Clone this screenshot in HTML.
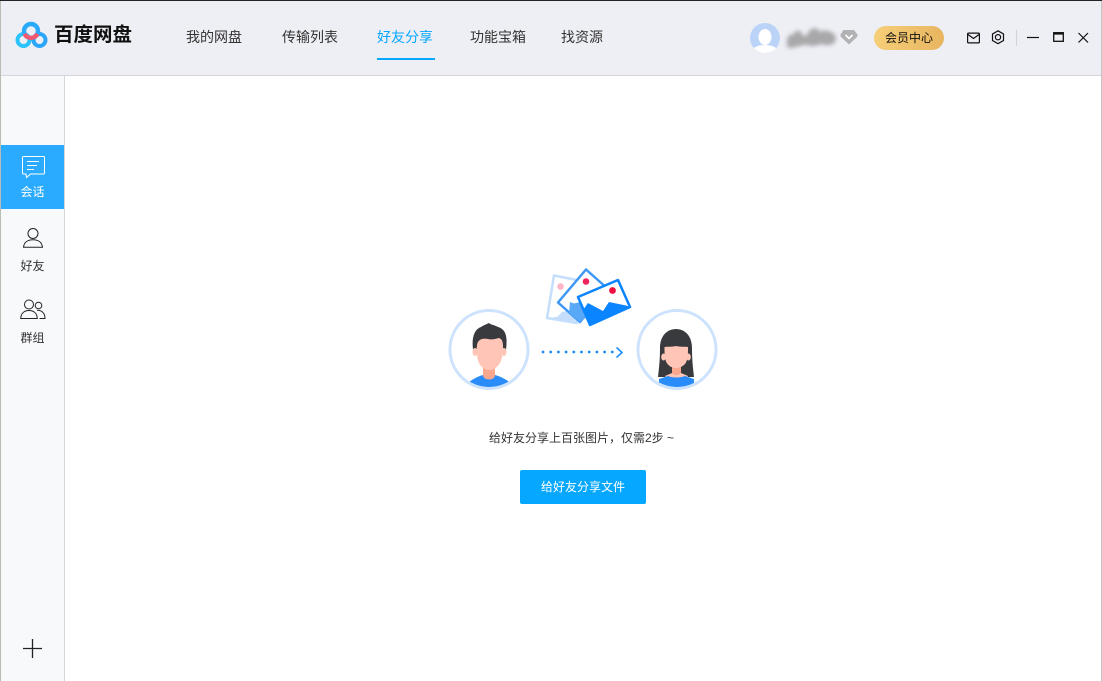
<!DOCTYPE html>
<html lang="zh"><head><meta charset="utf-8"><title>百度网盘</title>
<style>
html,body{margin:0;padding:0;background:#fff}
body{width:1102px;height:681px;position:relative;overflow:hidden;font-family:"Liberation Sans","Noto Sans CJK SC","WenQuanYi Zen Hei",sans-serif;color:#333}
div,span{position:absolute;white-space:nowrap}
.nav{top:28px;font-size:14px;line-height:18px;color:#333}
.side{left:1px;width:63px;text-align:center;font-size:12px;line-height:16px;color:#333}
svg{position:absolute;overflow:visible}
</style></head><body>
<div style="left:0;top:0;width:1102px;height:1px;background:#222"></div>
<div style="left:1px;top:1px;width:1100px;height:74px;background:#eeeff5"></div>
<div style="left:1px;top:75px;width:1100px;height:1px;background:#d5d6dc"></div>
<div style="left:1px;top:76px;width:63px;height:605px;background:#f8f9fb"></div>
<div style="left:64px;top:76px;width:1px;height:605px;background:#d5d6dc"></div>
<div style="left:0;top:1px;width:1px;height:680px;background:#b9bcb4"></div>
<div style="left:1101px;top:1px;width:1px;height:680px;background:#c4c4c4"></div>

<svg style="left:0;top:0" width="64" height="76" viewBox="0 0 64 76" fill="none">
<circle cx="23.500" cy="40" r="6" stroke="#2ac4fa" stroke-width="4"/>
<circle cx="39.500" cy="40" r="6" stroke="#2aa6fa" stroke-width="4"/>
<circle cx="31" cy="31" r="7" stroke="#2aaafa" stroke-width="4.400"/>
<path d="M24.600 33.800A7 7 0 0 0 37.400 33.800" stroke="#f5586e" stroke-width="4.400"/>
</svg>
<div style="left:54px;top:22px;font-size:19.500px;line-height:27px;font-weight:700;color:#111">百度网盘</div>

<div class="nav" style="left:186px">我的网盘</div>
<div class="nav" style="left:282px">传输列表</div>
<div class="nav" style="left:377px;color:#06a7ff">好友分享</div>
<div style="left:377px;top:58px;width:58px;height:2px;background:#06a7ff"></div>
<div class="nav" style="left:470px">功能宝箱</div>
<div class="nav" style="left:561px">找资源</div>

<svg style="left:750px;top:23px" width="30" height="30" viewBox="0 0 30 30">
<clipPath id="av"><circle cx="15" cy="15" r="15"/></clipPath>
<circle cx="15" cy="15" r="15" fill="#bcd3f8"/>
<g clip-path="url(#av)"><ellipse cx="15" cy="14" rx="6.500" ry="8" fill="#fff"/><ellipse cx="15" cy="27" rx="12" ry="5" fill="#fff"/></g>
</svg>
<svg style="left:786px;top:26px" width="54" height="24" viewBox="0 0 54 24">
<defs><filter id="bl" x="-20%" y="-40%" width="140%" height="180%"><feGaussianBlur stdDeviation="2.200"/></filter></defs>
<path d="M1 20C0 12 3 7 7 9C9 5 12 3 15 6C17 10 18 11 21 9C24 1 31 0 34 6C39 3 45 5 49 9C52 16 47 20 39 19C34 17 30 21 24 20C19 17 14 21 9 21C6 22 2 23 1 20Z" fill="#a8a8aa" filter="url(#bl)"/>
</svg>
<svg style="left:840px;top:30px" width="18" height="15" viewBox="0 0 18 15">
<path d="M3.500 0H14L17.500 4.500V6.500L9 14.500L0.500 6.500V4.500Z" fill="#b2b2b4"/>
<path d="M5.500 5L9 8.500L12.500 5" fill="none" stroke="#fff" stroke-width="1.600"/>
</svg>
<div style="left:874px;top:26px;width:70px;height:24px;border-radius:12px;background:linear-gradient(90deg,#f6cf78,#e8b560);text-align:center;font-size:12px;line-height:25px;color:#111">会员中心</div>

<svg style="left:960px;top:22px" width="142" height="30" viewBox="0 0 142 30" fill="none" stroke="#111" stroke-width="1.200">
<rect x="7.600" y="11.100" width="11.800" height="9.800" rx="1"/>
<path d="M8 12.500L13.500 16.500L19 12.500"/>
<path d="M38 8.800L43.500 12V18.500L38 21.700L32.500 18.500V12Z"/>
<circle cx="38" cy="15.200" r="2.600"/>
<path d="M56.500 8V24" stroke="#d3d4da"/>
<path d="M67 15.500H79"/>
<rect x="93.700" y="10.700" width="9.600" height="8.600" stroke-width="1.300"/>
<path d="M93.500 11.500H103.500" stroke-width="2.200"/>
<path d="M118.500 11L128 20.500M128 11L118.500 20.500"/>
</svg>

<div style="left:1px;top:145px;width:63px;height:64px;background:#2aabff"></div>
<svg style="left:21px;top:155px" width="24" height="24" viewBox="0 0 24 24" fill="none" stroke="#fff" stroke-width="1">
<path d="M2.500 1.500H22.500A1 1 0 0 1 23.500 2.500V18A1 1 0 0 1 22.500 19H9.500L5.500 22.500L5 19H2.500A1 1 0 0 1 1.500 18V2.500A1 1 0 0 1 2.500 1.500Z"/>
<path d="M6 6.500H18M6 10.500H16M6 14.500H13"/>
</svg>
<div class="side" style="top:184px;color:#fff">会话</div>
<svg style="left:22px;top:227px" width="22" height="21" viewBox="0 0 22 21" fill="none" stroke="#222" stroke-width="1">
<circle cx="11" cy="6.500" r="5"/>
<path d="M1.500 20.300C2 15 6 12.700 11 12.700C16 12.700 20 15 20.500 20.300Z"/>
</svg>
<div class="side" style="top:258px">好友</div>
<svg style="left:20px;top:299px" width="26" height="21" viewBox="0 0 26 21" fill="none" stroke="#222" stroke-width="1">
<circle cx="9" cy="5.500" r="4.500"/>
<path d="M0.700 19.500C1 14 4.500 11.500 9 11.500C13.500 11.500 17 14 17.300 19.500Z"/>
<circle cx="18.500" cy="6.500" r="3.300"/>
<path d="M17 11.300C22 11 25 14.500 25 19.500H19.500"/>
</svg>
<div class="side" style="top:330px">群组</div>
<svg style="left:23px;top:639px" width="20" height="20" viewBox="0 0 20 20" stroke="#222" stroke-width="1.300"><path d="M0 9.500H19M9.500 0V19"/></svg>

<!-- pictures -->
<svg style="left:530px;top:260px" width="110" height="75" viewBox="0 0 110 75">
<path d="M24 15.500L52 21L47 63L17 58Z" fill="#fff" stroke="#c4defc" stroke-width="2.500" stroke-linejoin="round"/>
<circle cx="30.500" cy="26.500" r="3.300" fill="#ffb5c8"/>
<path d="M27 57L32 52L40 50L47 63L17 58Z" fill="#c4defc"/>
<path d="M56 9.500L78 29L50 62L28 42.500Z" fill="#fff" stroke="#3d97f5" stroke-width="2.500" stroke-linejoin="round"/>
<circle cx="56" cy="21.500" r="3.300" fill="#f0235f"/>
<path d="M40 42L44 43.500L50 42L57 57L50 62L39 53Z" fill="#5aa9f7"/>
<path d="M48 37L88 20L100 47L60 65Z" fill="#fff" stroke="#0a84ff" stroke-width="2.500" stroke-linejoin="round"/>
<circle cx="82.500" cy="30.500" r="3.400" fill="#f01040"/>
<path d="M53 50L58 43L73 51L79 42L96 45.500L100 47L60 65Z" fill="#0a84ff"/>
</svg>

<!-- male -->
<svg style="left:448px;top:308px" width="82" height="84" viewBox="0 0 82 84">
<circle cx="41" cy="41.500" r="39" fill="#fff" stroke="#cde2fc" stroke-width="3"/>
<clipPath id="c1"><circle cx="41" cy="41.500" r="37.500"/></clipPath>
<g clip-path="url(#c1)">
<path d="M19 76C24 71 31 68 35 67H47C51 68 58 71 64 76L56 88H26Z" fill="#2a8cf8"/>
<path d="M35 56H47V67C47 73 35 73 35 67Z" fill="#f9a78f"/>
<path d="M25 41C23 24 30 20 33 19C36 17 39 16 41 15C43 17 47 17 50 19C57 21 60 27 58 42L56 45H27Z" fill="#383a3d"/>
<ellipse cx="27" cy="44" rx="2.500" ry="4" fill="#ffc6b8"/>
<ellipse cx="56" cy="44" rx="2.500" ry="4" fill="#ffc6b8"/>
<path d="M29 37C30 31 35 30 40 31C44 32 47 31 51 30C54 31 55 34 55 38C55 46 54 51 52 55C49 60 45 62 42 62C38 62 33 60 31 55C29 51 28 44 29 37Z" fill="#ffc6b8"/>
</g>
</svg>

<!-- arrow -->
<svg style="left:540px;top:345px" width="86" height="16" viewBox="0 0 86 16">
<g fill="#1e8cf8"><circle cx="3" cy="7" r="1.400"/><circle cx="10.700" cy="7" r="1.400"/><circle cx="18.400" cy="7" r="1.400"/><circle cx="26.100" cy="7" r="1.400"/><circle cx="33.800" cy="7" r="1.400"/><circle cx="41.500" cy="7" r="1.400"/><circle cx="49.200" cy="7" r="1.400"/><circle cx="56.900" cy="7" r="1.400"/><circle cx="64.600" cy="7" r="1.400"/><circle cx="72.300" cy="7" r="1.400"/></g>
<path d="M76.500 2.500L82 7.500L76.500 12.500" fill="none" stroke="#1e8cf8" stroke-width="1.600"/>
</svg>

<!-- female -->
<svg style="left:635px;top:308px" width="84" height="84" viewBox="0 0 84 84">
<circle cx="42" cy="41.500" r="39" fill="#fff" stroke="#cde2fc" stroke-width="3"/>
<clipPath id="c2"><circle cx="42" cy="41.500" r="37.500"/></clipPath>
<g clip-path="url(#c2)">
<path d="M25 40C25 28 32 21 41 21C50 21 57 28 57 40C57 52 58 60 59 69H23C24 60 25 52 25 40Z" fill="#383a3d"/>
<path d="M30 68L37 65H46L53 68L50 76H34Z" fill="#ffc6b8"/>
<path d="M37 56H46V64C46 68 37 68 37 64Z" fill="#f9a78f"/>
<path d="M24 71L33 68C37 70 46 70 50 68L59 71V90H24Z" fill="#2a8cf8"/>
<ellipse cx="28.500" cy="49" rx="2.300" ry="3.500" fill="#ffc6b8"/>
<ellipse cx="53.500" cy="49" rx="2.300" ry="3.500" fill="#ffc6b8"/>
<path d="M29.500 39C32 38.500 38 39 41 38C44 39 50 38.500 53 39C53 47 53 52 50 56C47 59 44 60 41 60C38 60 35 59 32.500 56C29.500 52 29.500 47 29.500 39Z" fill="#ffc6b8"/>
</g>
</svg>

<div style="left:489px;top:430px;font-size:12px;line-height:17px;color:#333">给好友分享上百张图片，仅需2步 ~</div>
<div style="left:520px;top:470px;width:126px;height:34px;background:#06a7ff;border-radius:2px;color:#fff;font-size:12px;line-height:34px;text-align:center">给好友分享文件</div>
</body></html>
